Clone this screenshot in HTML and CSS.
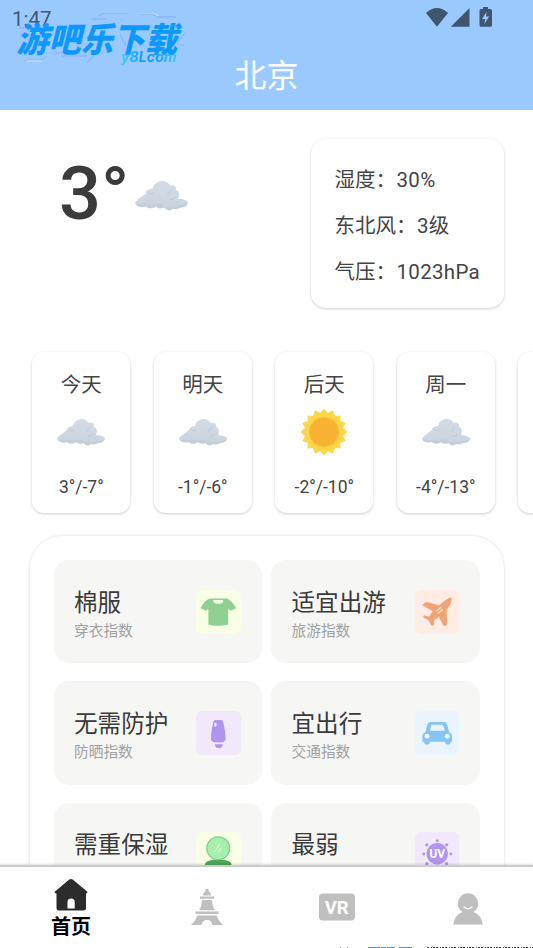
FILE: index.html
```html
<!DOCTYPE html>
<html lang="zh-CN">
<head>
<meta charset="utf-8">
<title>北京</title>
<link rel="stylesheet" href="styles.css">
</head>
<body>
<svg class="defs" aria-hidden="true">
  <defs>
    <linearGradient id="cloudFill" x1="0" y1="0" x2="0" y2="1"><stop offset="0" stop-color="#d3dce6"/><stop offset="1" stop-color="#c9d3df"/></linearGradient>
    <symbol id="cloud" viewBox="0 0 48 27">
      <path d="M0 20C2 16 7 14 10 11C10 8 14 7 16 7C17 2 21 0 25 0C29 0 31 3 32 4C36 3 38 6 37 8C41 9 40 14 39 16C42 16 46 17 48 19C48 23 44 24 41 24C39 26 36 25 34 25C32 27 28 27 27 24C24 25 21 25 19 23C16 25 12 25 10 23C6 24 1 23 0 20Z" fill="url(#cloudFill)"/>
      <path d="M1 21c3 1 6-1 9 0s6 1 9 0 5-1 7 1 5 0 8 1 6-1 13-2c-2 3-5 3-7 3-2 2-4 1-6 1-2 2-6 2-7-1-3 1-6 1-8-1-3 2-7 2-9 0-4 1-8 0-9-2z" fill="#bfc9d4" opacity=".6"/>
      <path d="M12 10q2 3 5 1M33 8q-2 4-4 4M36 15q-2 2-5 2" fill="none" stroke="#bbc7d4" stroke-width=".9"/>
    </symbol>
  </defs>
</svg>
<header class="header">
  <div class="status">
    <span class="clock">1:47</span>
    <svg class="status-icons" width="68" height="22" viewBox="0 0 68 22">
      <path d="M0 5Q11-5 22 5L11 18.700Z"/>
      <path d="M43.500 0V18.700H24.800Z"/>
      <path d="M57-1h5v2h2.500q1.500 0 1.500 1.500v14.700q0 1.500-1.500 1.500h-9.500q-1.500 0-1.500-1.500V2.500Q53.500 1 55 1H57z"/>
      <path d="M60.500 4l-4.500 7h3.200l-1 5 5-7.500h-3.200z" fill="#99c9ff"/>
    </svg>
  </div>
  <h1 class="city">北京</h1>
  <div class="watermark">
    <svg class="wm-lines" width="170" height="54" viewBox="0 0 170 54" fill="none">
      <path d="M2 15h13M3 21h12M82 3l4-3h26M122 1h14l4 3h19M75 6h15M38 40h25M45 43h25M8 47h17l5-4M70 50l8-9M160 30l8-10M103 21l6 12M163 32h4" stroke="#8299ee" stroke-width=".9" opacity=".65"/>
      <path d="M121 0h16l4 3M9 48h16" stroke="#fff" stroke-width=".8" opacity=".7"/>
    </svg>
    <span class="wm-name">游吧乐下载</span>
    <span class="wm-site">y8Lcom</span>
  </div>
</header>
<main class="content">
  <section class="now">
    <div class="temp">3°</div>
    <svg class="now-cloud"><use href="#cloud"/></svg>
    <div class="facts"><p>湿度：<span>30%</span></p><p>东北风：<span>3</span>级</p><p>气压：<span>1023hPa</span></p></div>
  </section>
  <section class="days">
    <article class="day"><h2>今天</h2><svg class="sky"><use href="#cloud"/></svg><p>3°/-7°</p></article>
    <article class="day"><h2>明天</h2><svg class="sky"><use href="#cloud"/></svg><p>-1°/-6°</p></article>
    <article class="day"><h2>后天</h2>
      <svg class="sky sun" viewBox="-24 -24 48 48"><path fill="#fed748" d="M0-23.500L4-19 9-21.700 11-16.100 16.600-16.600 16.100-11 21.700-9 19-4 23.500 0 19 4 21.700 9 16.100 11 16.600 16.600 11 16.100 9 21.700 4 19 0 23.500-4 19-9 21.700-11 16.100-16.600 16.600-16.100 11-21.700 9-19 4-23.500 0-19-4-21.700-9-16.100-11-16.600-16.600-11-16.100-9-21.700-4-19Z"/><circle r="14.700" fill="#f9b233"/></svg>
      <p>-2°/-10°</p></article>
    <article class="day"><h2>周一</h2><svg class="sky"><use href="#cloud"/></svg><p>-4°/-13°</p></article>
    <article class="day"></article>
  </section>
  <section class="panel">
    <article class="tile"><div><h3>棉服</h3><p>穿衣指数</p></div>
      <svg class="badge lime" viewBox="0 0 45 45"><path fill="#8ed092" d="M14 8.500Q9 10 4.500 18.500L10.500 21 12.500 19V35Q22.500 37.500 32.500 35V19L34.500 21 40.500 18.500Q36 10 31 8.500Z"/><path d="M17.500 10h10.200q0 4-5.100 4t-5.100-4z" fill="#faffe6"/></svg></article>
    <article class="tile"><div><h3>适宜出游</h3><p>旅游指数</p></div>
      <svg class="badge peach" viewBox="0 0 45 45"><path fill="#f0a476" d="M37 7.500Q34 7.500 28 12.500L24.500 15.500 11 12 7.500 15.500 18 21.500 14 27 9.500 25.500 8 27.500 13.500 30.500 17 36.500 19.500 35.500 19 31 24 27 29 36.500 32.500 35.500 32 20Q38 13 37 7.500Z"/><path d="M21.500 21.500l5-4M23 24l5-4.500" stroke="#ffe8b8" stroke-width="1.300"/></svg></article>
    <article class="tile"><div><h3>无需防护</h3><p>防晒指数</p></div>
      <svg class="badge lilac" viewBox="0 0 45 45"><path fill="#b094ed" d="M19.500 9h6q1.500 0 2 2 2 8 2.500 16 0 4.500-4 4.500h-7q-4 0-4-4.500.5-8 2.500-16 .5-2 2-2zM19 33.500h8q-.5 4-4 4t-4-4z"/><ellipse cx="19.700" cy="14" rx="1.200" ry="2" fill="#fff" opacity=".85"/></svg></article>
    <article class="tile"><div><h3>宜出行</h3><p>交通指数</p></div>
      <svg class="badge sky-blue" viewBox="0 0 45 45"><path fill="#85c4f5" fill-rule="evenodd" d="M15.500 11h14q3 0 4 7l1 3.500q3 1 3 4.500v5H36q0 3-2.700 3t-3-3H15q0 3-2.800 3t-3-3H7.500v-5q0-3.500 3-4.500l1-3.500q1-7 4-7zM17 14q-1.500 2-2 6h15q-.5-4-2-6z"/><circle cx="12.200" cy="25.500" r="2.500" fill="#eaf5ff"/><circle cx="32.700" cy="25.500" r="2.500" fill="#eaf5ff"/></svg></article>
    <article class="tile"><div><h3>需重保湿</h3><p>化妆指数</p></div>
      <svg class="badge lime" viewBox="0 0 45 45"><ellipse cx="22.500" cy="33" rx="13.500" ry="5.500" fill="#4da758"/><circle cx="22.500" cy="16.500" r="11.500" fill="#a8efae" stroke="#78d290" stroke-width="1.300"/><path d="M19 20l5-8M22.500 21l3-5" stroke="#e7ffe4" stroke-width="1"/></svg></article>
    <article class="tile"><div><h3>最弱</h3><p>紫外线指数</p></div>
      <svg class="badge lilac" viewBox="0 0 45 45"><g fill="#b094ed"><circle cx="22.500" cy="22" r="10.800"/><circle cx="22.500" cy="8.800" r="1.500"/><circle cx="12" cy="13" r="1.700"/><circle cx="32" cy="13" r="1.700"/><circle cx="8.800" cy="22.300" r="1.500"/><circle cx="36.200" cy="22.300" r="1.500"/><circle cx="12" cy="32" r="1.700"/><circle cx="32" cy="32" r="1.700"/></g><text class="uv" x="22.500" y="26.500" text-anchor="middle">UV</text></svg></article>
  </section>
</main>
<nav class="tabs">
  <a class="tab active"><svg width="34" height="32" viewBox="0 0 34 32"><path fill="#2c2c2c" fill-rule="evenodd" d="M15 .8q2-1.600 4 0L33 12.500q1 2-1 2V29q0 2.500-2.500 2.500h-25Q2.500 31.500 2.500 29V14.500q-2.500 0-1.500-2zM13.500 29.500h7.200V23q0-3.500-3.600-3.500T13.500 23z"/></svg><span>首页</span></a>
  <a class="tab"><svg width="32" height="37" viewBox="0 0 32 37" fill="#bfbfbf"><path d="M14.500 0h3v2l2.500 3v1.500h-8V5l2.500-3zM9 7.500h14v2.200H9zM11.200 11h9.600q.5 6 3 10.300H8.200q2.500-4.300 3-10.300zM4.500 22.500h23V25h-23zM6.500 26.500h19q2 5.500 6.500 9.500H21.500q-1-5-5.500-5t-5.500 5H0q4.500-4 6.500-9.500z"/></svg></a>
  <a class="tab"><svg width="36" height="28" viewBox="0 0 36 28"><rect y=".5" width="36" height="27" rx="4" fill="#bfbfbf"/><text class="vr" x="17.700" y="21" text-anchor="middle">VR</text></svg></a>
  <a class="tab"><svg width="30" height="32" viewBox="0 0 30 32"><path fill="#bfbfbf" d="M15 .3a10.200 10.200 0 0 1 5.500 18.700Q28.500 22 29.800 31.500H.2Q1.500 22 9.500 19A10.200 10.200 0 0 1 15 .3z"/><path d="M10.500 13.500q4.500 4.500 9 0" fill="none" stroke="#fff" stroke-width="1.200"/></svg></a>
  <svg class="edge" width="193" height="1" viewBox="0 0 193 1"><path d="M0 .5h10" stroke="#777" stroke-dasharray="1 6"/><path d="M28 .5h44" stroke="#249cff" stroke-dasharray="12 1 5 1 8 4 13 0"/><path d="M87 .5h106" stroke="#333" stroke-dasharray="2 2 1 1 2 1"/></svg>
</nav>
</body>
</html>
```
FILE: styles.css
```css
* { box-sizing: border-box; }
body {
  margin: 0;
  width: 533px;
  height: 948px;
  overflow: hidden;
  display: flex;
  flex-direction: column;
  background: #fff;
  color: #444;
  font-family: Roboto, "Noto Sans CJK SC", sans-serif;
}
h1, h2, h3, p { margin: 0; font-weight: 400; }
svg { display: block; flex: none; }
.defs { position: absolute; width: 0; height: 0; }

.header { position: relative; height: 109.500px; flex: none; background: #99c9ff; }
.status { height: 36px; padding: 8px 39px 0 12px; display: flex; justify-content: space-between; color: #45586e; }
.clock { font-size: 20.500px; line-height: 22px; }
.status-icons { fill: #40566e; overflow: visible; }
.city { color: #fff; font-size: 32px; line-height: 48px; padding-top: 15.500px; height: 73px; text-align: center; }
.watermark { position: absolute; left: 17px; top: 13px; width: 170px; height: 54px; }
.wm-lines { position: absolute; left: 0; top: 0; }
.wm-name {
  position: absolute; left: 3px; top: 6px;
  font: 900 32.200px/36px "Noto Sans CJK SC", sans-serif;
  color: #0d98ff; white-space: nowrap;
  transform: skewX(-14deg) scaleY(1.06);
}
.wm-site {
  position: absolute; left: 104px; top: 34px;
  font: italic 700 14.200px/20px Inter, sans-serif;
  background: linear-gradient(90deg, #3ed1ff, #159bff 35%, #159bff 60%, #3fcaff);
  -webkit-background-clip: text; background-clip: text;
  color: transparent;
}

.content { flex: 1; min-height: 0; overflow: hidden; }
.now { height: 242.500px; padding: 29.500px 29.500px 0 59px; display: flex; }
.temp { font-size: 74px; line-height: 84px; font-weight: 500; width: 76px; padding-top: 13px; white-space: nowrap; color: #3b3b3b; }
.now-cloud { width: 53px; height: 30px; margin-top: 41.500px; }
.facts {
  margin-left: auto; width: 193px; height: 169px; padding: 17.500px 0 0 24px;
  border-radius: 15px; box-shadow: 0 1px 3px rgba(0,0,0,.2);
  font-size: 20.500px; line-height: 46.300px; white-space: nowrap;
}
.facts span { letter-spacing: .3px; margin-left: .5px; }
.days { display: flex; gap: 23.500px; padding-left: 32.300px; height: 184px; }
.day {
  width: 98px; height: 161px; flex: none; padding-top: 17.500px;
  display: flex; flex-direction: column; align-items: center;
  border-radius: 12px; box-shadow: 0 1px 3px rgba(0,0,0,.2);
}
.day h2 { font-size: 20.500px; line-height: 30px; }
.sky { width: 48px; height: 27px; margin: 19px 0 28.500px; }
.sky.sun { height: 48px; margin: 8px 0 18.500px; }
.day p { font-size: 17.500px; line-height: 26px; }
.panel {
  margin: 0 29.500px; height: 500px; padding: 24px 24px 0;
  display: grid; grid-template-columns: 208px 209px; grid-auto-rows: 103.300px;
  column-gap: 9.500px; row-gap: 18px; align-content: start;
  border-radius: 32px; box-shadow: 0 0 3px rgba(0,0,0,.17);
}
.tile { display: flex; justify-content: space-between; padding: 25.500px 21px 0 20.500px; background: #f6f6f4; border-radius: 15px; white-space: nowrap; }
.tile h3 { font-size: 23.600px; line-height: 34px; color: #3a3a3a; }
.tile p { font-size: 14.700px; line-height: 22px; color: #a0a0a0; }
.badge { width: 44.500px; height: 44.500px; margin-top: 4px; border-radius: 6px; }
.lime { background: #f8ffe5; }
.peach { background: #ffece5; }
.lilac { background: #f1e8fb; }
.sky-blue { background: #e9f4ff; }
.uv { font: 700 12px Roboto, sans-serif; fill: #fff; }

.tabs {
  position: relative; height: 83px; flex: none; display: grid;
  grid-template-columns: 142px 130px 130.500px 130.500px;
  border-top: 2px solid #ccc; background: #fff; box-shadow: 0 -1px 2px rgba(0,0,0,.12);
}
.tab { display: flex; flex-direction: column; align-items: center; padding-top: 25.500px; }
.tab:nth-child(2) { padding-top: 22px; }
.tab.active { padding-top: 12px; }
.active span { font-size: 20px; line-height: 28px; font-weight: 700; color: #000; margin-top: 2px; }
.vr { font: 700 18.500px Roboto, sans-serif; fill: #fff; }
.edge { position: absolute; right: 0; bottom: 0; }
```
